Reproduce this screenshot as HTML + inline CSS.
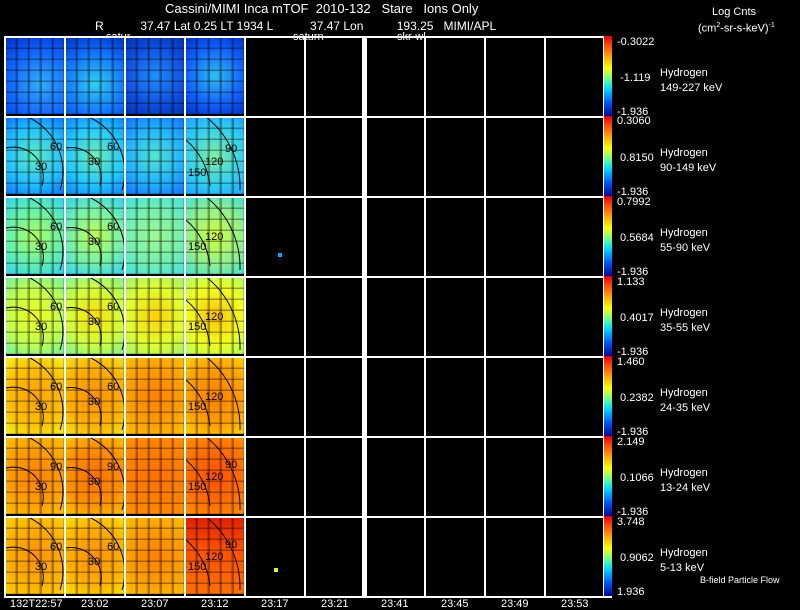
<!DOCTYPE html>
<html><head><style>
body{margin:0;background:#000;width:800px;height:609px;overflow:hidden;position:relative;font-family:"Liberation Sans",sans-serif;color:#fff}
.a{position:absolute}
.t{position:absolute;font-size:12px;white-space:nowrap;line-height:12px}
.vl{position:absolute;top:36px;height:560px;width:2px;background:#fff}
.hl{position:absolute;left:4px;width:608px;height:2px;background:#fff}
.cb{position:absolute;left:604px;width:8px;height:80px;background:linear-gradient(#e00000,#ff4000 10%,#ffa000 25%,#ffff00 40%,#80ff80 52%,#00e0ff 65%,#0060ff 82%,#0000a0)}
.p{position:absolute;width:58px;height:76px}
.p::after{content:"";position:absolute;inset:0;background:
linear-gradient(90deg,transparent 0 80%,rgba(0,0,0,.35) 80% 100%) 0 0/12px 100%,
linear-gradient(transparent 0 85%,rgba(0,0,0,.35) 85% 100%) 0 0/100% 11px}
.lab{position:absolute;left:660px;font-size:11px;line-height:15px}
.v{position:absolute;left:617px;font-size:11px}
</style></head><body>
<div class="t" style="left:165px;top:3px;font-size:13px">Cassini/MIMI Inca mTOF&nbsp; 2010-132&nbsp;&nbsp; Stare&nbsp;&nbsp; Ions Only</div>
<div class="t" style="left:95px;top:20px">R&nbsp;&nbsp;&nbsp;&nbsp;&nbsp;&nbsp;&nbsp;&nbsp;&nbsp;&nbsp; 37.47 Lat 0.25 LT 1934 L&nbsp;&nbsp;&nbsp;&nbsp;&nbsp;&nbsp;&nbsp;&nbsp;&nbsp;&nbsp; 37.47 Lon&nbsp;&nbsp;&nbsp;&nbsp;&nbsp;&nbsp;&nbsp;&nbsp;&nbsp; 193.25&nbsp;&nbsp; MIMI/APL</div>
<div class="t" style="left:106px;top:31px;font-size:11px">satur</div>
<div class="t" style="left:293px;top:31px;font-size:11px">saturn</div>
<div class="t" style="left:397px;top:31px;font-size:11px">skr-wl</div>
<div class="t" style="left:712px;top:6px;font-size:11px">Log Cnts</div>
<div class="t" style="left:698px;top:20px;font-size:11px">(cm<sup style="font-size:7px">2</sup>-sr-s-keV)<sup style="font-size:7px">-1</sup></div>

<div class="p" style="left:6px;top:38px;background:radial-gradient(circle at 60% 60%,#30b0ff,#1060ff 60%,#0030c0)"></div>
<div class="p" style="left:66px;top:38px;background:radial-gradient(circle at 50% 60%,#30d0f0,#1070ff 60%,#0030c0)"></div>
<div class="p" style="left:126px;top:38px;background:radial-gradient(circle at 50% 50%,#2090ff,#1050e0 60%,#0030b0)"></div>
<div class="p" style="left:186px;top:38px;background:radial-gradient(circle at 50% 50%,#30c0f0,#1060ff 60%,#0030c0)"></div>

<div class="p" style="left:6px;top:118px;background:radial-gradient(circle at 50% 50%,#60f0c0,#20c0ff 60%,#1070ff)"></div>
<div class="p" style="left:66px;top:118px;background:radial-gradient(circle at 50% 50%,#70f0b0,#20c8ff 60%,#1080ff)"></div>
<div class="p" style="left:126px;top:118px;background:radial-gradient(circle at 50% 50%,#50e8d0,#20b0ff 60%,#1070ff)"></div>
<div class="p" style="left:186px;top:118px;background:radial-gradient(circle at 50% 50%,#80f0a0,#30d0f0 60%,#20a0ff)"></div>

<div class="p" style="left:6px;top:198px;background:radial-gradient(circle,#b0ff60,#60f0b0 60%,#30d0f0)"></div>
<div class="p" style="left:66px;top:198px;background:radial-gradient(circle,#c0ff50,#70f0b0 60%,#30d0f0)"></div>
<div class="p" style="left:126px;top:198px;background:radial-gradient(circle,#a0f890,#70f0b0 60%,#40e0e0)"></div>
<div class="p" style="left:186px;top:198px;background:radial-gradient(circle,#d0ff40,#90f090 60%,#40e0d0)"></div>

<div class="p" style="left:6px;top:278px;background:radial-gradient(circle,#f0ff20,#c0ff50 60%,#70f0a0)"></div>
<div class="p" style="left:66px;top:278px;background:radial-gradient(circle,#ffe000,#d0ff40 60%,#80f090)"></div>
<div class="p" style="left:126px;top:278px;background:radial-gradient(circle,#ffd000,#e0ff30 60%,#a0f070)"></div>
<div class="p" style="left:186px;top:278px;background:radial-gradient(circle,#ffc000,#f0ff20 60%,#b0ff60)"></div>

<div class="p" style="left:6px;top:358px;background:radial-gradient(circle,#ffa000,#ffc000 60%,#f0f020)"></div>
<div class="p" style="left:66px;top:358px;background:radial-gradient(circle,#ff9000,#ffb000 60%,#f0e020)"></div>
<div class="p" style="left:126px;top:358px;background:radial-gradient(circle,#ff8000,#ffa000 60%,#ffc000)"></div>
<div class="p" style="left:186px;top:358px;background:radial-gradient(circle,#ff8000,#ffa000 60%,#ffd000)"></div>

<div class="p" style="left:6px;top:438px;background:radial-gradient(circle,#ff8000,#ffa000 60%,#ffc000)"></div>
<div class="p" style="left:66px;top:438px;background:radial-gradient(circle,#ff7000,#ff9000 60%,#ffc000)"></div>
<div class="p" style="left:126px;top:438px;background:radial-gradient(circle,#ff7000,#ff8000 60%,#ff9000)"></div>
<div class="p" style="left:186px;top:438px;background:radial-gradient(circle,#ff5000,#ff7000 60%,#ff9000)"></div>

<div class="p" style="left:6px;top:518px;background:radial-gradient(circle,#ff9000,#ffb000 60%,#ffd000)"></div>
<div class="p" style="left:66px;top:518px;background:radial-gradient(circle,#ff9000,#ffb000 60%,#ffe000)"></div>
<div class="p" style="left:126px;top:518px;background:radial-gradient(circle,#ff8000,#ffa000 60%,#ffc000)"></div>
<div class="p" style="left:186px;top:518px;background:linear-gradient(#e02000,#ff5000 40%,#ff7000)"></div>

<svg class="a" style="left:0;top:0" width="800" height="609">
<g id="r">
<path fill="none" stroke="#000" d="M6,148 A30,30 0 0 1 42,186"/>
<path fill="none" stroke="#000" d="M20,114 A60,60 0 0 1 60,190"/>
<path fill="none" stroke="#000" d="M66,148 A30,30 0 0 1 100,186"/>
<path fill="none" stroke="#000" d="M80,114 A60,60 0 0 1 122,190"/>
<path fill="none" stroke="#000" d="M186,140 A70,70 0 0 1 210,186"/>
<path fill="none" stroke="#000" d="M205,116 A90,90 0 0 1 240,190"/>
</g>
<use href="#r" y="80"/><use href="#r" y="160"/><use href="#r" y="240"/><use href="#r" y="320"/><use href="#r" y="400"/>
<g font-family="Liberation Sans" font-size="11" fill="#000">
<text x="35" y="170">30</text><text x="50" y="150">60</text><text x="88" y="165">30</text><text x="107" y="150">60</text><text x="188" y="176">150</text><text x="205" y="165">120</text><text x="225" y="152">90</text>
<text x="35" y="250">30</text><text x="50" y="230">60</text><text x="88" y="245">30</text><text x="107" y="230">60</text><text x="188" y="250">150</text><text x="205" y="240">120</text>
<text x="35" y="330">30</text><text x="50" y="310">60</text><text x="88" y="325">30</text><text x="107" y="310">60</text><text x="188" y="330">150</text><text x="205" y="320">120</text>
<text x="35" y="410">30</text><text x="50" y="390">60</text><text x="88" y="405">30</text><text x="107" y="390">60</text><text x="188" y="410">150</text><text x="205" y="400">120</text>
<text x="35" y="490">30</text><text x="50" y="470">90</text><text x="88" y="485">30</text><text x="107" y="470">90</text><text x="188" y="490">150</text><text x="205" y="480">120</text><text x="225" y="468">90</text>
<text x="35" y="570">30</text><text x="50" y="550">60</text><text x="88" y="565">30</text><text x="107" y="550">60</text><text x="188" y="570">150</text><text x="205" y="560">120</text><text x="225" y="548">90</text>
</g>
</svg>
<div class="a" style="left:278px;top:253px;width:4px;height:4px;background:#10a0ff"></div>
<div class="a" style="left:274px;top:568px;width:4px;height:4px;background:#e0f020"></div>

<div class="vl" style="left:4px"></div><div class="vl" style="left:64px"></div><div class="vl" style="left:124px"></div><div class="vl" style="left:184px"></div><div class="vl" style="left:244px"></div><div class="vl" style="left:304px"></div><div class="vl" style="left:362px;width:5px"></div><div class="vl" style="left:424px"></div><div class="vl" style="left:484px"></div><div class="vl" style="left:544px"></div><div class="vl" style="left:603px"></div>
<div class="hl" style="top:36px"></div><div class="hl" style="top:116px"></div><div class="hl" style="top:196px"></div><div class="hl" style="top:276px"></div><div class="hl" style="top:356px"></div><div class="hl" style="top:436px"></div><div class="hl" style="top:516px"></div><div class="hl" style="top:596px"></div>

<div class="cb" style="top:36px"></div><div class="cb" style="top:116px"></div><div class="cb" style="top:196px"></div><div class="cb" style="top:276px"></div><div class="cb" style="top:356px"></div><div class="cb" style="top:436px"></div><div class="cb" style="top:516px"></div>

<div class="v" style="top:36px">-0.3022</div><div class="v" style="top:72px">&nbsp;-1.119</div><div class="v" style="top:106px">-1.936</div>
<div class="v" style="top:115px">0.3060</div><div class="v" style="top:152px">&nbsp;0.8150</div><div class="v" style="top:186px">-1.936</div>
<div class="v" style="top:196px">0.7992</div><div class="v" style="top:232px">&nbsp;0.5684</div><div class="v" style="top:266px">-1.936</div>
<div class="v" style="top:276px">1.133</div><div class="v" style="top:312px">&nbsp;0.4017</div><div class="v" style="top:346px">-1.936</div>
<div class="v" style="top:356px">1.460</div><div class="v" style="top:392px">&nbsp;0.2382</div><div class="v" style="top:426px">-1.936</div>
<div class="v" style="top:436px">2.149</div><div class="v" style="top:472px">&nbsp;0.1066</div><div class="v" style="top:506px">-1.936</div>
<div class="v" style="top:516px">3.748</div><div class="v" style="top:552px">&nbsp;0.9062</div><div class="v" style="top:586px">1.936</div>

<div class="lab" style="top:66px">Hydrogen<br>149-227 keV</div>
<div class="lab" style="top:146px">Hydrogen<br>90-149 keV</div>
<div class="lab" style="top:226px">Hydrogen<br>55-90 keV</div>
<div class="lab" style="top:306px">Hydrogen<br>35-55 keV</div>
<div class="lab" style="top:386px">Hydrogen<br>24-35 keV</div>
<div class="lab" style="top:466px">Hydrogen<br>13-24 keV</div>
<div class="lab" style="top:546px">Hydrogen<br>5-13 keV</div>
<div class="t" style="left:700px;top:574px;font-size:9px">B-field Particle Flow</div>

<div class="t" style="left:10px;top:598px;font-size:11px">132T22:57</div>
<div class="t" style="left:81px;top:598px;font-size:11px">23:02</div>
<div class="t" style="left:141px;top:598px;font-size:11px">23:07</div>
<div class="t" style="left:201px;top:598px;font-size:11px">23:12</div>
<div class="t" style="left:261px;top:598px;font-size:11px">23:17</div>
<div class="t" style="left:321px;top:598px;font-size:11px">23:21</div>
<div class="t" style="left:381px;top:598px;font-size:11px">23:41</div>
<div class="t" style="left:441px;top:598px;font-size:11px">23:45</div>
<div class="t" style="left:501px;top:598px;font-size:11px">23:49</div>
<div class="t" style="left:561px;top:598px;font-size:11px">23:53</div>
</body></html>
